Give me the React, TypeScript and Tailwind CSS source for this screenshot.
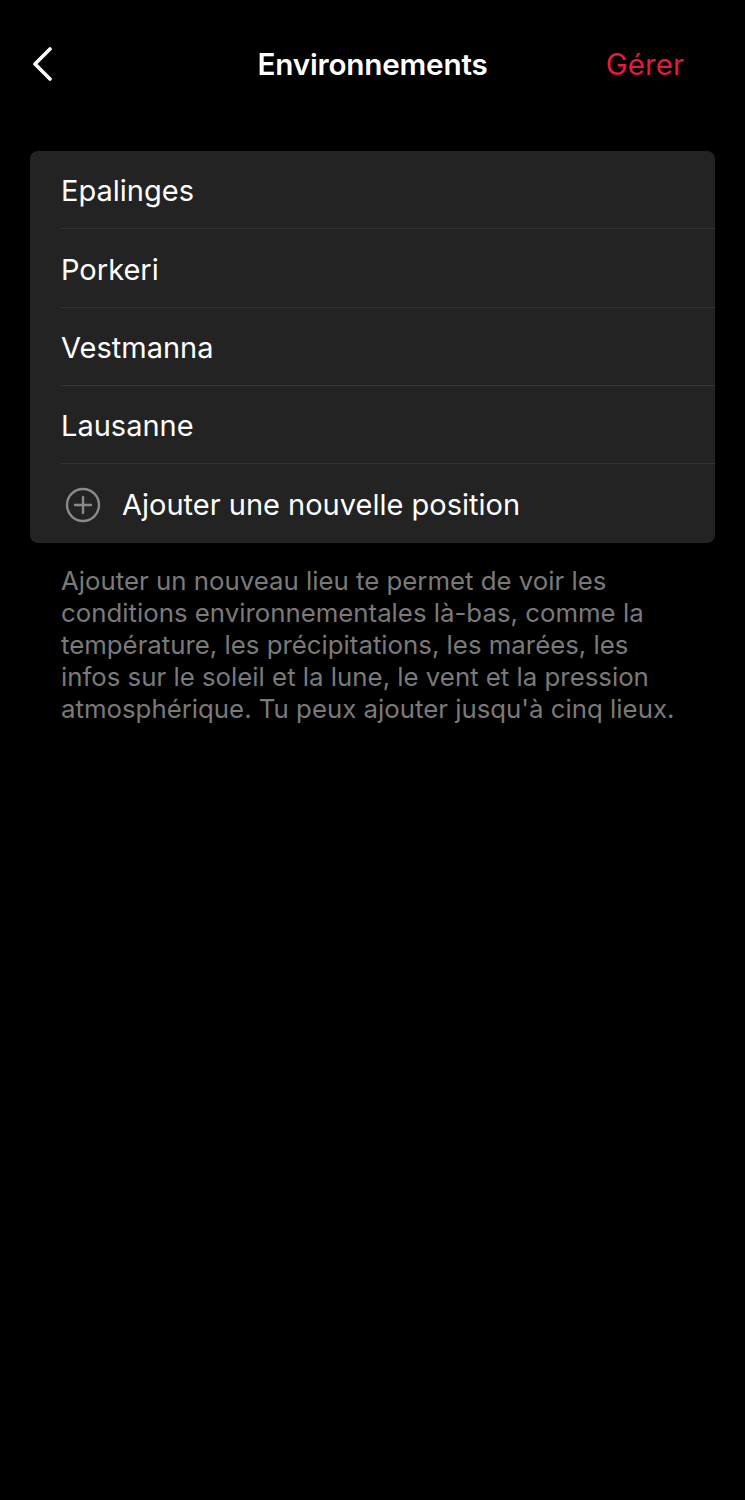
import React from 'react'

const PLACES = ['Epalinges', 'Porkeri', 'Vestmanna', 'Lausanne']

export default function App() {
  return (
    <div
      className="min-h-[1500px] w-full bg-black text-white"
      style={{ fontFamily: 'Inter, "Noto Sans", sans-serif' }}
    >
      {/* Nav bar */}
      <div className="flex h-[128px] items-center justify-between px-[30px]">
        <button className="flex w-[120px] items-center">
          <svg width="24" height="34" viewBox="0 0 24 34" fill="none">
            <path d="M20 2 L5 17 L20 32" stroke="white" strokeWidth="3.6" strokeLinecap="round" strokeLinejoin="round" />
          </svg>
        </button>
        <h1 className="text-[29.7px] font-semibold tracking-[-0.2px]">Environnements</h1>
        <div className="flex w-[120px] justify-end pr-[31px]">
          <span className="text-[29.5px] text-[#e31c3d]">Gérer</span>
        </div>
      </div>

      {/* List */}
      <div className="mx-[30px] mt-[23px] overflow-hidden rounded-[8px] bg-[#232323]">
        {PLACES.map(p => (
          <div key={p} className="pl-[31px]">
            <div className="flex h-[78.3px] items-center border-b border-[#343434] pt-[3px] text-[29px]">{p}</div>
          </div>
        ))}
        <div className="flex h-[79px] items-center pl-[35px] pt-[2px]">
          <svg width="36" height="36" viewBox="0 0 36 36" fill="none">
            <circle cx="18" cy="18" r="16" stroke="#8a8a8a" strokeWidth="2.4" />
            <path d="M18 10 V26 M10 18 H26" stroke="#8a8a8a" strokeWidth="2.4" strokeLinecap="round" />
          </svg>
          <span className="ml-[21px] text-[29px]">Ajouter une nouvelle position</span>
        </div>
      </div>

      <p className="mx-[61px] mt-[22px] text-[25.8px] leading-[32px] text-[#7a7a7a]">
        Ajouter un nouveau lieu te permet de voir les conditions environnementales là-bas, comme la température, les précipitations, les marées, les infos sur le soleil et la lune, le vent et la pression atmosphérique. Tu peux ajouter jusqu'à cinq lieux.
      </p>
    </div>
  )
}
